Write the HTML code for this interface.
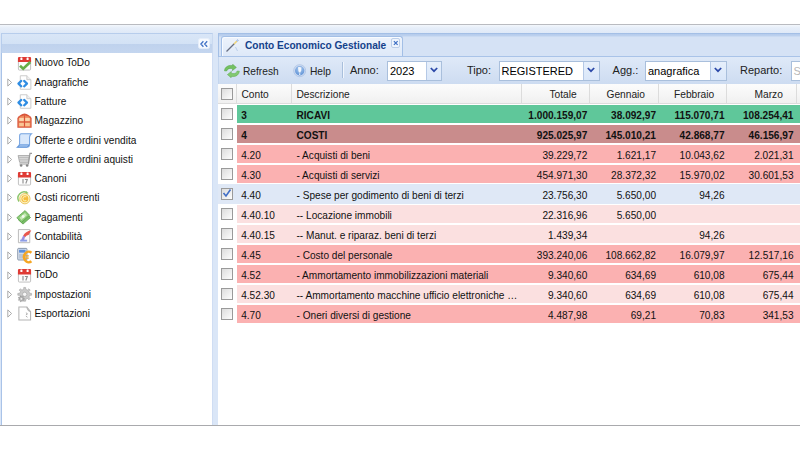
<!DOCTYPE html>
<html>
<head>
<meta charset="utf-8">
<title>Conto Economico Gestionale</title>
<style>
html,body{margin:0;padding:0;}
body{width:800px;height:450px;overflow:hidden;background:#fff;font-family:"Liberation Sans",sans-serif;font-size:11px;color:#000;position:relative;}
.abs{position:absolute;}
#app{left:0;top:24px;width:800px;height:402px;background:linear-gradient(#f3f7fc 0,#e6eef9 3px,#dde8f7 9px,#dae6f7 12px,#dae6f7 100%);border-top:1px solid #b9bbc0;border-bottom:1px solid #a9aaad;box-sizing:border-box;}
/* left panel */
#lhead{left:1px;top:33px;width:211.5px;height:20px;box-sizing:border-box;border:1px solid #b7cdec;border-right-color:#c9d9f0;border-bottom:none;background:linear-gradient(#d9e6f7 0%,#d3e2f5 50%,#bfd2ed 54%,#c4d6ef 100%);}
#lbody{left:1px;top:53px;width:212.2px;height:372px;box-sizing:border-box;border:1px solid #a9c3e8;border-right-color:#cfddf3;border-top:none;border-bottom:none;background:#fff;}
#coll{left:198px;top:37.5px;width:12.4px;height:11.8px;box-sizing:border-box;border:1px solid #e6eefa;background:#f7fafe;border-radius:2.5px;}
.ti{position:absolute;left:0;height:19px;width:210px;line-height:19.6px;font-size:10.1px;white-space:nowrap;color:#111;}
.ti .arr{position:absolute;left:4.6px;top:5.2px;}
.ti .lbl{position:absolute;left:32.4px;top:0;}
.ti svg.ic{position:absolute;left:14.8px;top:2.3px;width:15px;height:15px;overflow:visible;}
/* right panel */
#tabstrip{left:217.6px;top:33.4px;width:582.4px;height:24px;box-sizing:border-box;border:1px solid #a3bfe6;border-right:none;border-bottom:none;background:linear-gradient(#b4cbec 0,#bdd2ef 2px,#d5e2f5 3px,#d5e2f5 100%);}
#tabline{left:219px;top:56.3px;width:581px;height:1.2px;background:#a9c3e8;}
#tab{left:221px;top:36.4px;width:182.3px;height:20.4px;box-sizing:border-box;border:1px solid #a3bfe6;border-bottom:none;border-radius:3px 3px 0 0;background:linear-gradient(#edf3fc,#dde8f8);box-shadow:inset 1px 1px 0 #f8fbff;}
#tabtxt{left:245px;top:39px;font-weight:bold;color:#15428b;font-size:10.15px;line-height:14px;white-space:nowrap;}
#tabx{left:390.5px;top:38px;width:9.5px;height:9.5px;box-sizing:border-box;border:1px solid #bccfea;border-radius:2px;background:#eff5fd;}
#tbar{left:217.6px;top:57px;width:582.4px;height:27.6px;box-sizing:border-box;border-left:1px solid #c3d5ee;border-bottom:1px solid #cad9ee;background:linear-gradient(#dfe9f8,#cddcf1);}
.tl{font-size:11px !important;top:62.6px !important;}
.tt{position:absolute;top:65px;font-size:10.2px;line-height:14px;white-space:nowrap;color:#222;}
.combo{position:absolute;top:61px;height:20px;box-sizing:border-box;border:1px solid #a9bfdc;background:#fff;}
.combo .v{position:absolute;left:2px;top:2px;font-size:11px;line-height:14px;white-space:nowrap;color:#000;}
.combo .tr{position:absolute;right:0;top:0;width:14.5px;height:18px;border-left:1px solid #b5c9e6;background:linear-gradient(#e6effb,#dae7f9);}
.combo .tr svg{position:absolute;left:3.3px;top:5.2px;}
.sep{position:absolute;top:62px;width:1px;height:16px;background:#a9bfdc;border-right:1px solid #f1f6fd;}
/* grid */
#grid{left:217.6px;top:84.4px;width:582.4px;height:340.6px;background:#fff;}
#ghead{left:217.6px;top:84.4px;width:582.4px;height:20px;box-sizing:border-box;background:linear-gradient(#fcfcfc,#f0f0f0);border-bottom:1px solid #dcdcdc;}
.hc{position:absolute;top:84.4px;height:19.4px;line-height:22.4px;font-size:10.2px;color:#222;box-sizing:border-box;border-right:1px solid #dcdcdc;white-space:nowrap;}
.hc.l{padding-left:5px;text-align:left;}
.hc.c{text-align:center;}
.row{position:absolute;left:236.5px;width:563.5px;height:18.7px;font-size:10.1px;line-height:21.8px;white-space:nowrap;color:#111;}
.row span{position:absolute;top:0;transform:translateY(-0.5px);}
.row .c1{left:4.7px;}
.row .c2{left:60px;}
.row .n{text-align:right;width:64px;}
.row .n1{left:286.8px;width:64px;}
.row .n2{left:355.5px;width:64px;}
.row .n3{left:424px;width:64px;}
.row .n4{left:493px;width:64px;}
.b{font-weight:bold;}
.cb{position:absolute;left:221.3px;width:11.6px;height:11.6px;box-sizing:border-box;border:1px solid #9a9a9a;background:linear-gradient(135deg,#dcdcdc,#fdfdfd);}
</style>
</head>
<body>
<div id="app" class="abs"></div>

<!-- LEFT PANEL -->
<div id="lhead" class="abs"></div>
<div id="coll" class="abs"><svg style="position:absolute;left:0;top:0" width="10" height="10" viewBox="0 0 10 10"><path d="M4.4 2.3 L1.9 5 L4.4 7.7 M8.2 2.3 L5.7 5 L8.2 7.7" fill="none" stroke="#4273c6" stroke-width="1.3"/></svg></div>
<div id="lbody" class="abs">
</div>
<div class="abs" style="left:2px;top:0;width:211px;height:0"><!--TREE-->
<div class="ti" style="top:53.4px"><svg class="ic" width="16" height="16" viewBox="0 0 16 16"><rect x="1.5" y="3.5" width="13" height="11.5" rx="1" fill="#fdfdfd" stroke="#bdbdbd"/><path d="M1 2.2 Q1 1 2.2 1 H13.8 Q15 1 15 2.2 V6.5 H1 Z" fill="#df3a34"/><rect x="3.6" y="1.6" width="2.2" height="2.6" rx=".6" fill="#fff"/><rect x="10.2" y="1.6" width="2.2" height="2.6" rx=".6" fill="#fff"/><path d="M3.2 10.4 L6.6 13.6 L14.2 6.4" fill="none" stroke="#67ad48" stroke-width="2.8"/></svg><span class="lbl">Nuovo ToDo</span></div>
<div class="ti" style="top:72.7px"><svg class="arr" width="6" height="9" viewBox="0 0 6 9"><path d="M.8 .9 L4.6 4.5 L.8 8.1 Z" fill="#fff" stroke="#ababab" stroke-width="1"/></svg><svg class="ic" width="16" height="16" viewBox="0 0 16 16"><path d="M3.5 .8 H10.5 L14.8 5 V15.2 H3.5 Z" fill="#fff" stroke="#c9c9c9"/><path d="M10.5 .8 V5 H14.8" fill="#f1f1f1" stroke="#c9c9c9"/><path d="M4.6 6.3 L1.5 9.2 L4.6 12.1" fill="none" stroke="#2f8de3" stroke-width="2.3" stroke-linejoin="round" stroke-linecap="round"/><path d="M7.6 6.3 L10.7 9.2 L7.6 12.1" fill="none" stroke="#2f8de3" stroke-width="2.3" stroke-linejoin="round" stroke-linecap="round"/></svg><span class="lbl">Anagrafiche</span></div>
<div class="ti" style="top:91.9px"><svg class="arr" width="6" height="9" viewBox="0 0 6 9"><path d="M.8 .9 L4.6 4.5 L.8 8.1 Z" fill="#fff" stroke="#ababab" stroke-width="1"/></svg><svg class="ic" width="16" height="16" viewBox="0 0 16 16"><path d="M3.5 .8 H10.5 L14.8 5 V15.2 H3.5 Z" fill="#fff" stroke="#c9c9c9"/><path d="M10.5 .8 V5 H14.8" fill="#f1f1f1" stroke="#c9c9c9"/><path d="M4.6 6.3 L1.5 9.2 L4.6 12.1" fill="none" stroke="#2f8de3" stroke-width="2.3" stroke-linejoin="round" stroke-linecap="round"/><path d="M7.6 6.3 L10.7 9.2 L7.6 12.1" fill="none" stroke="#2f8de3" stroke-width="2.3" stroke-linejoin="round" stroke-linecap="round"/></svg><span class="lbl">Fatture</span></div>
<div class="ti" style="top:111.2px"><svg class="arr" width="6" height="9" viewBox="0 0 6 9"><path d="M.8 .9 L4.6 4.5 L.8 8.1 Z" fill="#fff" stroke="#ababab" stroke-width="1"/></svg><svg class="ic" width="16" height="16" viewBox="0 0 16 16"><path d="M.4 15.6 V5.2 Q3.4 1.2 8 .4 Q12.6 1.2 15.6 5.2 V15.6 Z" fill="#d9543a"/><path d="M1.6 14.6 V5.8 Q4 3 8 2.4 Q12 3 14.4 5.8 V14.6 Z" fill="#ee8a5c"/><rect x="2.4" y="5.2" width="4.9" height="3.6" fill="#fbd6ac"/><rect x="8.7" y="5.2" width="4.9" height="3.6" fill="#fbd6ac"/><rect x="2.4" y="10.2" width="4.9" height="3.8" fill="#f9c595"/><rect x="8.7" y="10.2" width="4.9" height="3.8" fill="#f9c595"/><path d="M8 2.4 V14.6 M1.6 9.5 H14.4" stroke="#d9543a" stroke-width="1.1"/></svg><span class="lbl">Magazzino</span></div>
<div class="ti" style="top:130.5px"><svg class="arr" width="6" height="9" viewBox="0 0 6 9"><path d="M.8 .9 L4.6 4.5 L.8 8.1 Z" fill="#fff" stroke="#ababab" stroke-width="1"/></svg><svg class="ic" width="16" height="16" viewBox="0 0 16 16"><path d="M4.4 .8 H15.4 Q13.4 2.4 13.4 4.6 V12 Q13.4 15.2 10.4 15.2 H.4 Q2.8 13.6 2.8 11 V3.2 Q2.8 .8 4.4 .8Z" fill="#d9e8fb" stroke="#74a3e0" stroke-width="1.1"/><path d="M.6 15 H10.4 Q12.2 14.6 12.6 12.6 H2.8 Q2.6 14 .6 15Z" fill="#a9c9f1" stroke="#5d92d8" stroke-width=".9"/></svg><span class="lbl">Offerte e ordini vendita</span></div>
<div class="ti" style="top:149.8px"><svg class="arr" width="6" height="9" viewBox="0 0 6 9"><path d="M.8 .9 L4.6 4.5 L.8 8.1 Z" fill="#fff" stroke="#ababab" stroke-width="1"/></svg><svg class="ic" width="16" height="16" viewBox="0 0 16 16"><path d="M1.2 3.8 H13.4 L12 11 H2.8 Z" fill="#dadada" stroke="#a3a3a3" stroke-width=".9"/><path d="M1.8 6 H13 M2.2 8.4 H12.6" stroke="#b3b3b3" stroke-width=".9"/><path d="M16 1.4 H13.8 L12.2 12.8 H2.6" fill="none" stroke="#9a9a9a" stroke-width="1.3"/><circle cx="4.4" cy="14.4" r="1.4" fill="#858585"/><circle cx="10.8" cy="14.4" r="1.4" fill="#858585"/></svg><span class="lbl">Offerte e ordini aquisti</span></div>
<div class="ti" style="top:169.0px"><svg class="arr" width="6" height="9" viewBox="0 0 6 9"><path d="M.8 .9 L4.6 4.5 L.8 8.1 Z" fill="#fff" stroke="#ababab" stroke-width="1"/></svg><svg class="ic" width="16" height="16" viewBox="0 0 16 16"><rect x="1.5" y="3.5" width="13" height="11.5" rx="1" fill="#fdfdfd" stroke="#bdbdbd"/><path d="M1 2.2 Q1 1 2.2 1 H13.8 Q15 1 15 2.2 V6.8 H1 Z" fill="#df3a34"/><rect x="3.6" y="1.6" width="2.2" height="2.6" rx=".6" fill="#fff"/><rect x="10.2" y="1.6" width="2.2" height="2.6" rx=".6" fill="#fff"/><path d="M6.4 8.6 V13.4 M8.4 9 H11 L9.4 13.4" fill="none" stroke="#8f8f8f" stroke-width="1.2"/></svg><span class="lbl">Canoni</span></div>
<div class="ti" style="top:188.3px"><svg class="arr" width="6" height="9" viewBox="0 0 6 9"><path d="M.8 .9 L4.6 4.5 L.8 8.1 Z" fill="#fff" stroke="#ababab" stroke-width="1"/></svg><svg class="ic" width="16" height="16" viewBox="0 0 16 16"><path d="M2.2 11.2 A6.6 6.6 0 0 1 10.6 1.6" fill="none" stroke="#8cc56a" stroke-width="1.5"/><path d="M9.6 .2 L12.4 2.2 L9.4 3.6 Z" fill="#8cc56a"/><circle cx="8.4" cy="8.2" r="5.5" fill="#fdf2c4" stroke="#e6bd48" stroke-width=".9"/><circle cx="8.4" cy="8.2" r="3.7" fill="#f4bc3c"/><path d="M10 6.6 A2.2 2.2 0 1 0 10 9.8" fill="none" stroke="#fde9a6" stroke-width="1.2"/></svg><span class="lbl">Costi ricorrenti</span></div>
<div class="ti" style="top:207.6px"><svg class="arr" width="6" height="9" viewBox="0 0 6 9"><path d="M.8 .9 L4.6 4.5 L.8 8.1 Z" fill="#fff" stroke="#ababab" stroke-width="1"/></svg><svg class="ic" width="16" height="16" viewBox="0 0 16 16"><path d="M1.4 10.4 L9.6 3.2 L14.4 8 L6.4 15 Z" fill="#79bd66" stroke="#569c46" stroke-width=".8"/><path d="M-.2 8.2 L8.6 .6 L13.4 5.6 L4.8 13.2 Z" fill="#8ccb78" stroke="#5aa04a" stroke-width=".8"/><path d="M2.6 8.2 L8.4 3.2 L10.6 5.6 L4.8 10.6 Z" fill="#c7e8b8"/><circle cx="6.6" cy="6.9" r="1.5" fill="#f2faee"/></svg><span class="lbl">Pagamenti</span></div>
<div class="ti" style="top:226.8px"><svg class="arr" width="6" height="9" viewBox="0 0 6 9"><path d="M.8 .9 L4.6 4.5 L.8 8.1 Z" fill="#fff" stroke="#ababab" stroke-width="1"/></svg><svg class="ic" width="16" height="16" viewBox="0 0 16 16"><path d="M1.5 .6 H13.6 V14.6 H1.5 Z" fill="#fbfbfb" stroke="#b8b8b8"/><path d="M6.4 7.4 Q9 2.6 15.2 1.4 L12.6 6 Q9.6 6.4 8.4 9 Z" fill="#e9574c"/><path d="M4 12.4 L6.6 7 L8.6 8.2 L7.4 12.4 Z" fill="#9a8fe0"/><rect x="3.4" y="11.4" width="7.4" height="2" fill="#8c9ce6"/></svg><span class="lbl">Contabilità</span></div>
<div class="ti" style="top:246.1px"><svg class="arr" width="6" height="9" viewBox="0 0 6 9"><path d="M.8 .9 L4.6 4.5 L.8 8.1 Z" fill="#fff" stroke="#ababab" stroke-width="1"/></svg><svg class="ic" width="16" height="16" viewBox="0 0 16 16"><rect x=".8" y=".4" width="9.8" height="12.4" rx=".8" fill="#e4ebf4" stroke="#71829a" stroke-width=".9"/><rect x="2.2" y="1.8" width="7" height="3.2" fill="#5b8edb"/><rect x="2.2" y="6" width="7" height="5.4" fill="#b9c5d6"/><path d="M15.4 5 A5 5.6 0 1 0 15.4 14.2" fill="none" stroke="#f5a623" stroke-width="2.6"/><path d="M6.4 8.4 H12.6 M6.4 10.8 H12.6" stroke="#f5a623" stroke-width="1.3"/></svg><span class="lbl">Bilancio</span></div>
<div class="ti" style="top:265.4px"><svg class="arr" width="6" height="9" viewBox="0 0 6 9"><path d="M.8 .9 L4.6 4.5 L.8 8.1 Z" fill="#fff" stroke="#ababab" stroke-width="1"/></svg><svg class="ic" width="16" height="16" viewBox="0 0 16 16"><rect x="1.5" y="3.5" width="13" height="11.5" rx="1" fill="#fdfdfd" stroke="#bdbdbd"/><path d="M1 2.2 Q1 1 2.2 1 H13.8 Q15 1 15 2.2 V6.8 H1 Z" fill="#df3a34"/><rect x="3.6" y="1.6" width="2.2" height="2.6" rx=".6" fill="#fff"/><rect x="10.2" y="1.6" width="2.2" height="2.6" rx=".6" fill="#fff"/><path d="M6.4 8.6 V13.4 M8.4 9 H11 L9.4 13.4" fill="none" stroke="#8f8f8f" stroke-width="1.2"/></svg><span class="lbl">ToDo</span></div>
<div class="ti" style="top:284.6px"><svg class="arr" width="6" height="9" viewBox="0 0 6 9"><path d="M.8 .9 L4.6 4.5 L.8 8.1 Z" fill="#fff" stroke="#ababab" stroke-width="1"/></svg><svg class="ic" width="16" height="16" viewBox="0 0 16 16"><path d="M13.50 6.75 L15.53 6.81 L15.53 8.79 L13.50 8.85 L12.69 10.80 L14.08 12.29 L12.69 13.68 L11.20 12.29 L9.25 13.10 L9.19 15.13 L7.21 15.13 L7.15 13.10 L5.20 12.29 L3.71 13.68 L2.32 12.29 L3.71 10.80 L2.90 8.85 L0.87 8.79 L0.87 6.81 L2.90 6.75 L3.71 4.80 L2.32 3.31 L3.71 1.92 L5.20 3.31 L7.15 2.50 L7.21 0.47 L9.19 0.47 L9.25 2.50 L11.20 3.31 L12.69 1.92 L14.08 3.31 L12.69 4.80 Z" fill="#c9c9c9" stroke="#a8a8a8" stroke-width=".7"/><circle cx="8.2" cy="7.8" r="2.3" fill="#f7f7f7" stroke="#a5a5a5" stroke-width=".7"/><path d="M6.74 12.11 L7.76 12.11 L7.76 13.09 L6.74 13.09 L6.32 13.97 L6.95 14.77 L6.19 15.38 L5.55 14.58 L4.60 14.80 L4.37 15.79 L3.42 15.58 L3.65 14.58 L2.88 13.97 L1.96 14.41 L1.54 13.53 L2.46 13.09 L2.46 12.11 L1.54 11.67 L1.96 10.79 L2.88 11.23 L3.65 10.62 L3.42 9.62 L4.37 9.41 L4.60 10.40 L5.55 10.62 L6.19 9.82 L6.95 10.43 L6.32 11.23 Z" fill="#b9b9b9" stroke="#8f8f8f" stroke-width=".6"/><circle cx="4.6" cy="12.6" r=".9" fill="#f4f4f4"/></svg><span class="lbl">Impostazioni</span></div>
<div class="ti" style="top:303.9px"><svg class="arr" width="6" height="9" viewBox="0 0 6 9"><path d="M.8 .9 L4.6 4.5 L.8 8.1 Z" fill="#fff" stroke="#ababab" stroke-width="1"/></svg><svg class="ic" width="16" height="16" viewBox="0 0 16 16"><path d="M2 1 H10.5 L14.5 6 V15 H2 Z" fill="#fff" stroke="#b3b3b3" stroke-width="1.1"/><path d="M10.5 1 Q11 5 14.5 6" fill="none" stroke="#b3b3b3" stroke-width="1.1"/><path d="M9.5 7.2 L11.2 8.4 L9.5 9.6 M9.5 10.8 L11.2 12 " fill="none" stroke="#a9a9a9" stroke-width="1"/></svg><span class="lbl">Esportazioni</span></div>
<!--/TREE--></div>

<!-- RIGHT PANEL -->
<div id="tabstrip" class="abs"></div>
<div id="tab" class="abs"></div>
<div id="tabline" class="abs"></div>
<div id="tabtxt" class="abs">Conto Economico Gestionale</div>
<div id="tabx" class="abs"><svg style="position:absolute;left:0;top:0" width="7.5" height="7.5" viewBox="0 0 8 8"><path d="M2 2.2 L6 6.2 M6 2.2 L2 6.2" fill="none" stroke="#3d6fc4" stroke-width="1.3"/></svg></div>
<svg class="abs" style="left:224px;top:38px" width="16" height="16" viewBox="0 0 16 16"><path d="M2.5 13.5 L10.5 5.5" stroke="#666e82" stroke-width="1.25"/><path d="M10 6 L13.2 2.8" stroke="#ecd27a" stroke-width="1.6"/><path d="M13.5 1 V4 M12 2.5 H15 M11.5 9 L13.5 13" stroke="#b9cdea" stroke-width="1"/></svg>
<div id="tbar" class="abs"></div>
<!--TB-->

<svg class="abs" style="left:224px;top:64px" width="16" height="14" viewBox="0 0 16 14"><path d="M.4 6.8 C.8 3.2 3.6 1.4 6.8 1.4 L8.8 1.6 L8.6 .2 L12.4 3.4 L8.4 6.6 L8.6 4.6 L6.8 4.4 C4.6 4.4 3.4 5.2 2.6 7 Z" fill="#74c162" stroke="#55a245" stroke-width=".5"/><path d="M15.4 7.2 C15 10.8 12.2 12.6 9 12.6 L7 12.4 L7.2 13.8 L3.4 10.6 L7.4 7.4 L7.2 9.4 L9 9.6 C11.2 9.6 12.4 8.8 13.2 7 Z" fill="#82c970" stroke="#5cab4b" stroke-width=".5"/></svg>
<div class="tt" style="left:243px">Refresh</div>
<svg class="abs" style="left:293px;top:64.2px" width="13.4" height="13.4" viewBox="0 0 14 14"><defs><radialGradient id="hg" cx=".5" cy=".3" r=".75"><stop offset="0" stop-color="#a9c9ef"/><stop offset="1" stop-color="#5a8fd4"/></radialGradient></defs><circle cx="7" cy="7" r="6.3" fill="#cddaf0" stroke="#a6bfe3" stroke-width=".7"/><circle cx="7" cy="7" r="4.9" fill="url(#hg)"/><path d="M5.2 3.4 Q7 2.6 8.8 3.6 L8.6 6.6 L7.8 9 H6.2 L5.6 6.8 Z" fill="#f3f7fd"/><circle cx="7" cy="10.6" r=".8" fill="#eaf1fb"/></svg>
<div class="tt" style="left:310px">Help</div>
<div class="sep" style="left:342px"></div>
<div class="tt tl" style="left:350px">Anno:</div>
<div class="combo" style="left:387px;width:55px"><span class="v">2023</span><span class="tr"><svg width="8" height="6" viewBox="0 0 8 6"><path d="M.8 1 L4 4.2 L7.2 1" fill="none" stroke="#2b48a8" stroke-width="1.7"/></svg></span></div>
<div class="tt tl" style="left:467px">Tipo:</div>
<div class="combo" style="left:498.5px;width:101px"><span class="v">REGISTERED</span><span class="tr"><svg width="8" height="6" viewBox="0 0 8 6"><path d="M.8 1 L4 4.2 L7.2 1" fill="none" stroke="#2b48a8" stroke-width="1.7"/></svg></span></div>
<div class="tt tl" style="left:612.6px">Agg.:</div>
<div class="combo" style="left:645px;width:81.5px"><span class="v">anagrafica</span><span class="tr"><svg width="8" height="6" viewBox="0 0 8 6"><path d="M.8 1 L4 4.2 L7.2 1" fill="none" stroke="#2b48a8" stroke-width="1.7"/></svg></span></div>
<div class="tt tl" style="left:740px">Reparto:</div>
<div class="combo" style="left:790.5px;width:40px"><span class="v" style="color:#b8b8b8">S</span></div>

<!--/TB-->

<div id="grid" class="abs"></div>
<div id="ghead" class="abs"></div>
<!--GRID-->

<div class="hc" style="left:217.6px;width:19px"></div>
<div class="hc" style="left:237px;width:55px"><span style="position:absolute;left:4.5px">Conto</span></div>
<div class="hc" style="left:292px;width:230px"><span style="position:absolute;left:4.5px">Descrizione</span></div>
<div class="hc" style="left:522px;width:68px"><span style="position:absolute;left:27.5px">Totale</span></div>
<div class="hc" style="left:590px;width:69px"><span style="position:absolute;left:16.5px">Gennaio</span></div>
<div class="hc" style="left:659px;width:68px"><span style="position:absolute;left:15px">Febbraio</span></div>
<div class="hc" style="left:727px;width:70px"><span style="position:absolute;left:27.5px">Marzo</span></div>
<div class="cb" style="top:88.2px"></div>
<div class="row b" style="top:104.6px;background:#5fc79a"><span class="c1">3</span><span class="c2">RICAVI</span><span class="n n1">1.000.159,07</span><span class="n n2">38.092,97</span><span class="n n3">115.070,71</span><span class="n n4">108.254,41</span></div>
<div class="cb" style="top:108.2px"></div>
<div class="row b" style="top:124.6px;background:#c98c8c"><span class="c1">4</span><span class="c2">COSTI</span><span class="n n1">925.025,97</span><span class="n n2">145.010,21</span><span class="n n3">42.868,77</span><span class="n n4">46.156,97</span></div>
<div class="cb" style="top:128.2px"></div>
<div class="row" style="top:144.6px;background:#fbb1b1"><span class="c1">4.20</span><span class="c2">- Acquisti di beni</span><span class="n n1">39.229,72</span><span class="n n2">1.621,17</span><span class="n n3">10.043,62</span><span class="n n4">2.021,31</span></div>
<div class="cb" style="top:148.2px"></div>
<div class="row" style="top:164.6px;background:#fbb1b1"><span class="c1">4.30</span><span class="c2">- Acquisti di servizi</span><span class="n n1">454.971,30</span><span class="n n2">28.372,32</span><span class="n n3">15.970,02</span><span class="n n4">30.601,53</span></div>
<div class="cb" style="top:168.2px"></div>
<div class="abs" style="left:217.6px;top:183.8px;width:582.4px;height:19.8px;background:#dfe8f6"></div>
<div class="row" style="top:184.6px;background:#dfe8f6"><span class="c1">4.40</span><span class="c2">- Spese per godimento di beni di terzi</span><span class="n n1">23.756,30</span><span class="n n2">5.650,00</span><span class="n n3">94,26</span><span class="n n4"></span></div>
<div class="cb" style="top:188.2px"><svg style="position:absolute;left:0;top:-1px" width="10" height="10" viewBox="0 0 10 10"><path d="M1.5 5 L4 8 L8.5 1.5" fill="none" stroke="#426fc6" stroke-width="1.6"/></svg></div>
<div class="row" style="top:204.6px;background:#fbe0e0"><span class="c1">4.40.10</span><span class="c2">-- Locazione immobili</span><span class="n n1">22.316,96</span><span class="n n2">5.650,00</span><span class="n n3"></span><span class="n n4"></span></div>
<div class="cb" style="top:208.2px"></div>
<div class="row" style="top:224.6px;background:#fbe0e0"><span class="c1">4.40.15</span><span class="c2">-- Manut. e riparaz. beni di terzi</span><span class="n n1">1.439,34</span><span class="n n2"></span><span class="n n3">94,26</span><span class="n n4"></span></div>
<div class="cb" style="top:228.2px"></div>
<div class="row" style="top:244.6px;background:#fbb1b1"><span class="c1">4.45</span><span class="c2">- Costo del personale</span><span class="n n1">393.240,06</span><span class="n n2">108.662,82</span><span class="n n3">16.079,97</span><span class="n n4">12.517,16</span></div>
<div class="cb" style="top:248.2px"></div>
<div class="row" style="top:264.6px;background:#fbb1b1"><span class="c1">4.52</span><span class="c2">- Ammortamento immobilizzazioni materiali</span><span class="n n1">9.340,60</span><span class="n n2">634,69</span><span class="n n3">610,08</span><span class="n n4">675,44</span></div>
<div class="cb" style="top:268.2px"></div>
<div class="row" style="top:284.6px;background:#fbe0e0"><span class="c1">4.52.30</span><span class="c2">-- Ammortamento macchine ufficio elettroniche …</span><span class="n n1">9.340,60</span><span class="n n2">634,69</span><span class="n n3">610,08</span><span class="n n4">675,44</span></div>
<div class="cb" style="top:288.2px"></div>
<div class="row" style="top:304.6px;background:#fbb1b1"><span class="c1">4.70</span><span class="c2">- Oneri diversi di gestione</span><span class="n n1">4.487,98</span><span class="n n2">69,21</span><span class="n n3">70,83</span><span class="n n4">341,53</span></div>
<div class="cb" style="top:308.2px"></div>
<!--/GRID-->

</body>
</html>
